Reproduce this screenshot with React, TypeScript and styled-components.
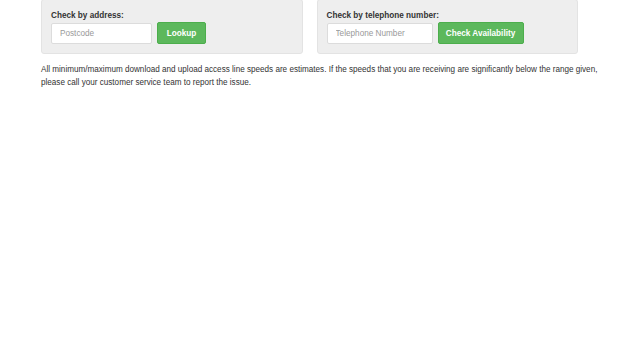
import React from "react";
import styled, { createGlobalStyle } from "styled-components";

const Global = createGlobalStyle`
  html, body { margin: 0; padding: 0; background: #fff; }
  body { font-family: "Liberation Sans", Arial, sans-serif; color: #333; }
`;

const Page = styled.div`
  padding: 0 10px 0 41px;
`;

const Row = styled.div`
  display: flex;
  gap: 14px;
  width: 537px;
`;

const Well = styled.div`
  flex: 1;
  box-sizing: border-box;
  height: 55px;
  margin-top: -1px;
  background: #eeeeee;
  border: 1px solid #e3e3e3;
  border-radius: 3px;
  padding: 10px 9px 0;
`;

const Label = styled.div`
  font-size: 8.2px;
  font-weight: bold;
  line-height: 11px;
  margin-bottom: 1px;
  color: #333;
`;

const Form = styled.div`
  display: flex;
  gap: 5px;
  align-items: center;
`;

const Input = styled.input<{ $w: number }>`
  box-sizing: border-box;
  width: ${(p) => p.$w}px;
  height: 21px;
  border: 1px solid #dcdcdc;
  border-radius: 2px;
  background: #fff;
  padding: 0 8px;
  font-family: "Liberation Sans", Arial, sans-serif;
  font-size: 8.2px;
  color: #555;
  outline: none;
  &::placeholder { color: #999; }
`;

const Button = styled.button<{ $w: number }>`
  box-sizing: border-box;
  width: ${(p) => p.$w}px;
  height: 22px;
  background: #5cb85c;
  border: 1px solid #4cae4c;
  border-radius: 2px;
  color: #fff;
  font-family: "Liberation Sans", Arial, sans-serif;
  font-weight: bold;
  font-size: 8.2px;
  padding: 0;
`;

const Note = styled.p`
  margin: 10px 0 0;
  font-size: 8.15px;
  line-height: 12.5px;
  color: #333;
  white-space: nowrap;
`;

export default function App() {
  return (
    <Page>
      <Global />
      <Row>
        <Well>
          <Label>Check by address:</Label>
          <Form>
            <Input $w={101} placeholder="Postcode" />
            <Button $w={49}>Lookup</Button>
          </Form>
        </Well>
        <Well>
          <Label>Check by telephone number:</Label>
          <Form>
            <Input $w={106} placeholder="Telephone Number" />
            <Button $w={86}>Check Availability</Button>
          </Form>
        </Well>
      </Row>
      <Note>
        All minimum/maximum download and upload access line speeds are estimates. If the speeds that you are receiving are significantly below the range given,
        <br />
        please call your customer service team to report the issue.
      </Note>
    </Page>
  );
}
